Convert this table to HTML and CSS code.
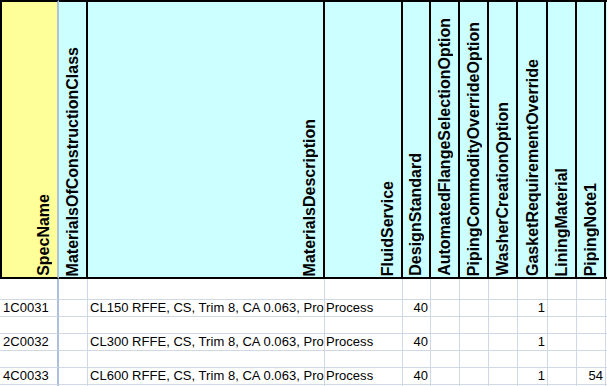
FILE: index.html
```html
<!DOCTYPE html>
<html>
<head>
<meta charset="utf-8">
<link rel="stylesheet" href="styles.css">
</head>
<body>
<div class="sheet">
  <div class="hd first"><span class="vt">SpecName</span></div>
  <div class="hd"><span class="vt">MaterialsOfConstructionClass</span></div>
  <div class="hd"><span class="vt">MaterialsDescription</span></div>
  <div class="hd"><span class="vt">FluidService</span></div>
  <div class="hd"><span class="vt">DesignStandard</span></div>
  <div class="hd"><span class="vt">AutomatedFlangeSelectionOption</span></div>
  <div class="hd"><span class="vt">PipingCommodityOverrideOption</span></div>
  <div class="hd"><span class="vt">WasherCreationOption</span></div>
  <div class="hd"><span class="vt">GasketRequirementOverride</span></div>
  <div class="hd"><span class="vt">LiningMaterial</span></div>
  <div class="hd"><span class="vt">PipingNote1</span></div>
  <div class="hd"></div>

  <div class="c c1"></div><div class="c"></div><div class="c"></div><div class="c"></div><div class="c"></div><div class="c"></div><div class="c"></div><div class="c"></div><div class="c"></div><div class="c"></div><div class="c"></div><div class="c"></div>

  <div class="c c1 txt">1C0031</div><div class="c"></div><div class="c txt desc">CL150 RFFE, CS, Trim 8, CA 0.063, Process</div><div class="c txt svc">Process</div><div class="c num">40</div><div class="c"></div><div class="c"></div><div class="c"></div><div class="c num">1</div><div class="c"></div><div class="c"></div><div class="c"></div>

  <div class="c c1"></div><div class="c"></div><div class="c"></div><div class="c"></div><div class="c"></div><div class="c"></div><div class="c"></div><div class="c"></div><div class="c"></div><div class="c"></div><div class="c"></div><div class="c"></div>

  <div class="c c1 txt">2C0032</div><div class="c"></div><div class="c txt desc">CL300 RFFE, CS, Trim 8, CA 0.063, Process</div><div class="c txt svc">Process</div><div class="c num">40</div><div class="c"></div><div class="c"></div><div class="c"></div><div class="c num">1</div><div class="c"></div><div class="c"></div><div class="c"></div>

  <div class="c c1"></div><div class="c"></div><div class="c"></div><div class="c"></div><div class="c"></div><div class="c"></div><div class="c"></div><div class="c"></div><div class="c"></div><div class="c"></div><div class="c"></div><div class="c"></div>

  <div class="c c1 txt">4C0033</div><div class="c"></div><div class="c txt desc">CL600 RFFE, CS, Trim 8, CA 0.063, Process</div><div class="c txt svc">Process</div><div class="c num">40</div><div class="c"></div><div class="c"></div><div class="c"></div><div class="c num">1</div><div class="c"></div><div class="c num">54</div><div class="c"></div>

  <div class="c c1"></div><div class="c"></div><div class="c"></div><div class="c"></div><div class="c"></div><div class="c"></div><div class="c"></div><div class="c"></div><div class="c"></div><div class="c"></div><div class="c"></div><div class="c"></div>
</div>
</body>
</html>
```
FILE: styles.css
```css
html, body {
  margin: 0;
  padding: 0;
  background: #ffffff;
  overflow: hidden;
}
.sheet {
  display: grid;
  grid-template-columns: 59px 29px 237px 78px 28px 29px 29px 29px 30px 29px 29px 60px;
  grid-template-rows: 279px 21px repeat(6, 17px);
  width: 666px;
  font-family: "Liberation Sans", Arial, sans-serif;
  color: #000;
}
.hd {
  box-sizing: border-box;
  background: #ccffff;
  border-top: 2px solid #000;
  border-bottom: 2px solid #000;
  border-right: 2px solid #000;
  display: flex;
  justify-content: flex-end;
  align-items: flex-end;
  padding: 0 4px 1px 0;
  overflow: hidden;
}
.hd.first {
  background: #ffff99;
  border-left: 2px solid #000;
  border-right: 2px solid #b3c3de;
}
.vt {
  writing-mode: vertical-rl;
  transform: rotate(180deg);
  white-space: nowrap;
  font-weight: bold;
  font-size: 16px;
  line-height: 18px;
  flex: none;
}
.c {
  box-sizing: border-box;
  border-right: 1px solid #d0d7e5;
  border-bottom: 1px solid #d0d7e5;
  font-size: 13px;
  line-height: 16px;
  letter-spacing: 0.03px;
  white-space: nowrap;
  overflow: hidden;
}
.c.c1 {
  border-right: 2px solid #aebfdb;
}
.txt {
  padding-left: 2px;
}
.c1.txt {
  padding-left: 3px;
}
.svc {
  padding-left: 1px;
}
.num {
  text-align: right;
  padding-right: 2px;
}
```
